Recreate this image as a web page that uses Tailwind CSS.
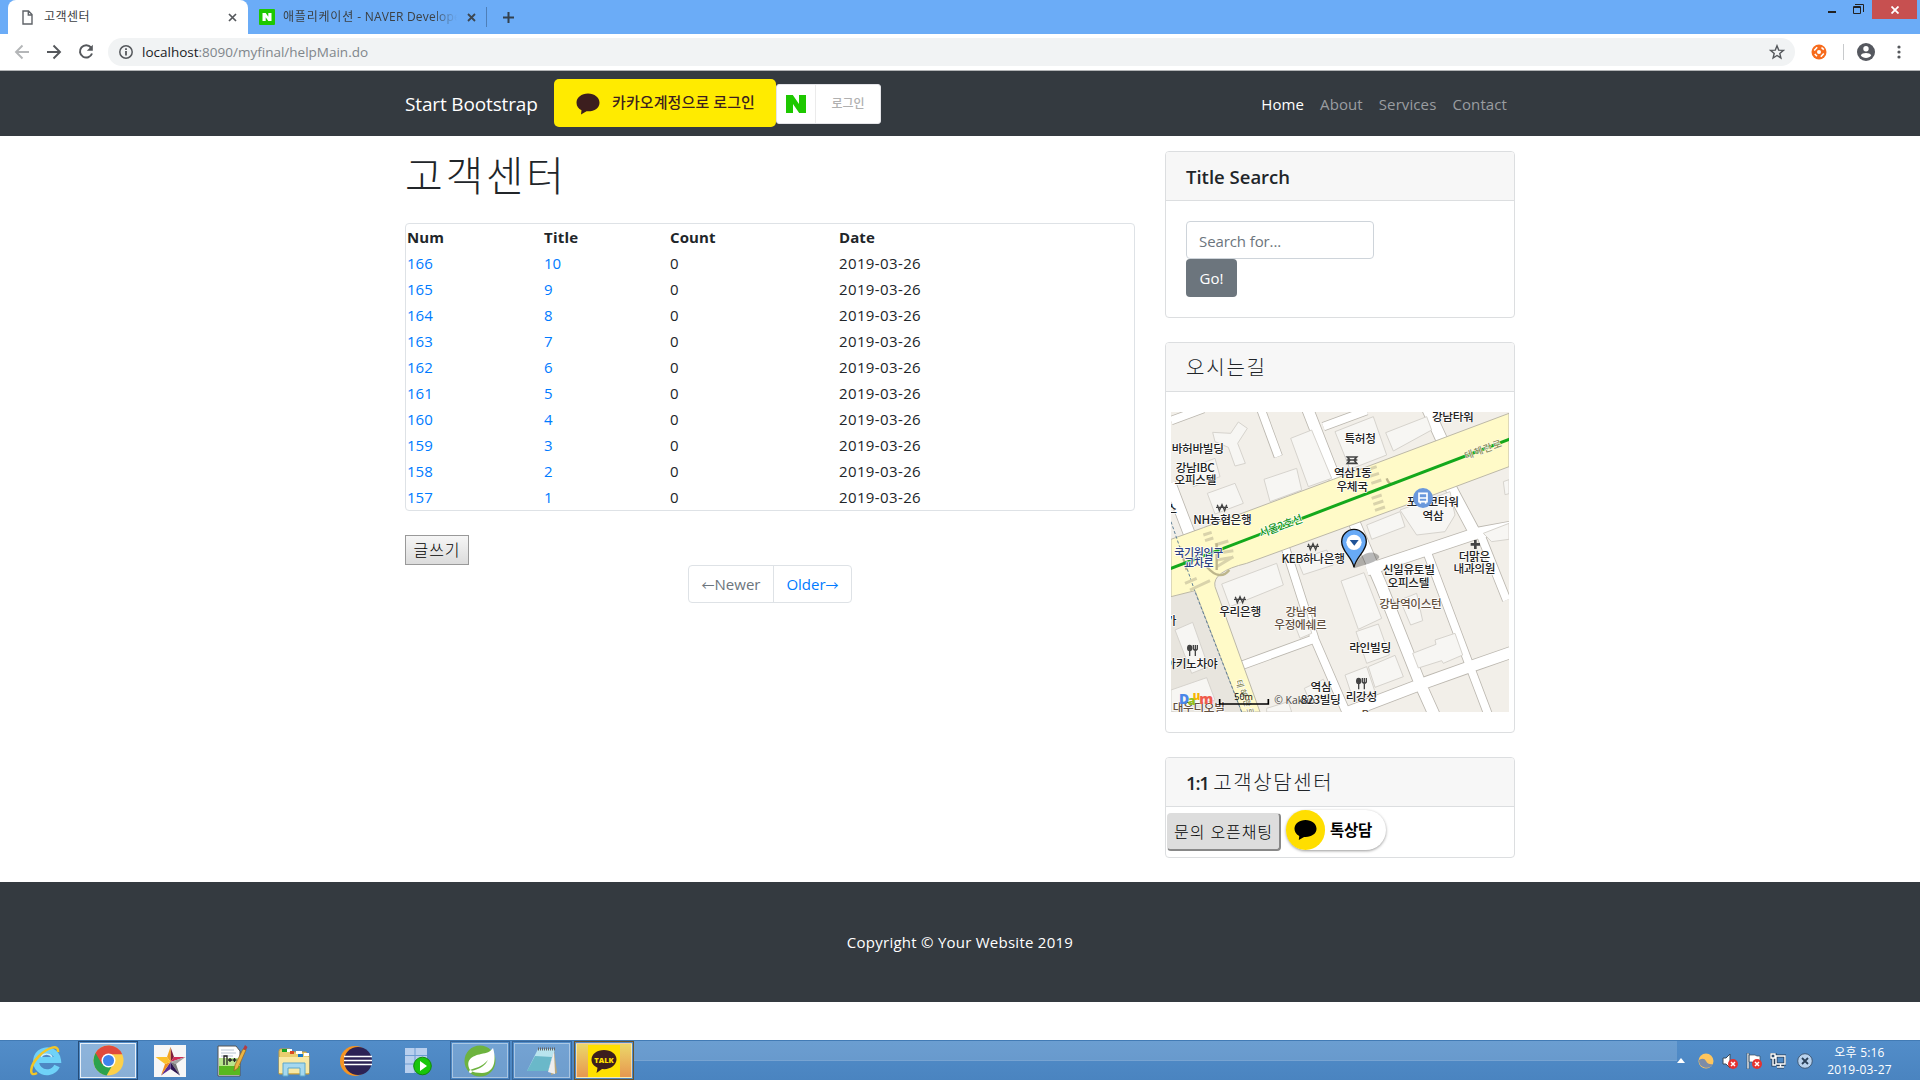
<!DOCTYPE html>
<html lang="ko">
<head>
<meta charset="utf-8">
<title>고객센터</title>
<script src="https://cdn.jsdelivr.net/npm/@tailwindcss/browser@4"></script>
</head>
<body class="w-[1920px] h-[1080px] overflow-hidden bg-white flex flex-col font-['Open_Sans','Noto_Sans_CJK_KR',sans-serif] text-[15px] leading-6 text-[#212529]">

<!-- Tab strip -->
<div class="h-[34px] shrink-0 bg-[#6bacf7] flex text-xs text-[#3c4043]">
  <div class="ml-2 w-[240px] shrink-0 bg-white rounded-t-lg flex items-center pl-[14px] pr-[10px]">
    <svg class="w-[11px] h-[15px] shrink-0" viewBox="0 0 11 15" fill="none" stroke="#5f6368" stroke-width="1.4"><path d="M1 1h5.5L10 4.5V14H1z M6.3 1v4H10"/></svg>
    <span class="ml-[11px] grow tracking-[0.5px]">고객센터</span>
    <svg class="w-[9px] h-[9px] mr-[1px]" viewBox="0 0 9 9" stroke="#55585c" stroke-width="1.7"><path d="M1 1l7 7M8 1L1 8"/></svg>
  </div>
  <div class="w-[238px] shrink-0 flex items-center pl-[11px]">
    <svg class="w-4 h-4 shrink-0" viewBox="0 0 16 16"><rect width="16" height="16" rx="1" fill="#1ec800"/><path d="M3.5 4h3.2l2.6 3.8V4h3.2v8H9.300L6.700 8.200V12H3.500z" fill="#fff"/></svg>
    <span class="ml-[8px] w-[174px] shrink-0 overflow-hidden whitespace-nowrap tracking-[0.2px] [mask-image:linear-gradient(to_right,black_86%,transparent)]"><span class="tracking-[0.8px]">애플리케이션</span> - NAVER Developers</span>
    <svg class="w-[9px] h-[9px] ml-[10px]" viewBox="0 0 9 9" stroke="#3c4650" stroke-width="1.800"><path d="M1 1l7 7M8 1L1 8"/></svg>
  </div>
  <div class="flex items-center">
    <div class="w-px h-5 bg-[#4e7fb8]"></div>
    <svg class="w-[11px] h-[11px] ml-4" viewBox="0 0 11 11" stroke="#33404e" stroke-width="2"><path d="M5.500 0v11M0 5.500h11"/></svg>
  </div>
  <div class="ml-auto flex mr-[3px]">
    <svg class="w-[36px] h-[19px] mr-[8px]" viewBox="0 0 36 19" fill="none" stroke="#222"><path d="M0 12h8" stroke-width="2"/><path d="M25.500 6.500h7v7h-7zM25 7.500h8M27 4.500h8.500V12" stroke-width="1"/></svg>
    <div class="w-[45px] h-[19px] bg-[#c75050] flex items-center justify-center">
      <svg class="w-[8px] h-[8px]" viewBox="0 0 8 8" stroke="#fff" stroke-width="1.800"><path d="M.5.500l7 7M7.500.500l-7 7"/></svg>
    </div>
  </div>
</div>

<!-- Address bar -->
<div class="h-[37px] shrink-0 bg-white border-b border-[#b2b4b6] flex items-center pl-[14px] pr-[19px]">
  <svg class="w-4 h-4" viewBox="0 0 16 16" fill="none" stroke="#b4b6b8" stroke-width="1.900"><path d="M15 8H2M8.500 1.500L2 8l6.500 6.500"/></svg>
  <svg class="w-4 h-4 ml-4" viewBox="0 0 16 16" fill="none" stroke="#55585c" stroke-width="1.900"><path d="M1 8h13M7.500 1.500L14 8l-6.500 6.500"/></svg>
  <svg class="w-4 h-4 ml-4" viewBox="0 0 16 16" fill="none" stroke="#55585c" stroke-width="2"><path d="M13 3.500A6.200 6.200 0 1 0 14 9.500"/><path d="M14.800.8v6h-6z" fill="#55585c" stroke="none"/></svg>
  <div class="ml-[14px] w-[1687px] h-7 rounded-full bg-[#f1f3f4] flex items-center pl-[11px] pr-[10px]">
    <svg class="w-[14px] h-[14px]" viewBox="0 0 14 14" fill="none" stroke="#55585c" stroke-width="1.500"><circle cx="7" cy="7" r="6.200"/><path d="M7 6v4.500M7 3.300v1.600" stroke-width="1.800"/></svg>
    <span class="ml-[9px] text-[13.5px] text-[#80868b]"><span class="text-[#202124]">localhost</span>:8090/myfinal/helpMain.do</span>
    <svg class="w-[16px] h-[16px] ml-auto" viewBox="0 0 16 16" fill="none" stroke="#55585c" stroke-width="1.400"><path d="M8 1.800l1.700 4.300 4.700.3-3.600 3 1.100 4.600L8 11.500 4.100 14l1.100-4.600-3.600-3 4.700-.3z"/></svg>
  </div>
  <svg class="w-4 h-4 ml-4" viewBox="0 0 16 16"><circle cx="8" cy="8" r="7.500" fill="#f76b1c"/><circle cx="8" cy="8" r="2" fill="#fff"/><path d="M3.200 6.500l3-3.300M10.500 3.500l2.300 2.200M12.800 9.500l-3 3.300M3.800 10l2.200 2.300" fill="none" stroke="#fff" stroke-width="1.600"/></svg>
  <div class="w-px h-4 bg-[#c8cacc] ml-4"></div>
  <svg class="w-[18px] h-[18px] ml-[13px]" viewBox="0 0 18 18"><circle cx="9" cy="9" r="9" fill="#55585f"/><circle cx="9" cy="5.800" r="2.700" fill="#fff"/><path d="M3.800 12.500c1.300-3.200 9.100-3.200 10.400 0-2 3.300-8.400 3.300-10.400 0z" fill="#fff"/></svg>
  <svg class="w-[4px] h-[14px] ml-auto" viewBox="0 0 4 14" fill="#55585c"><circle cx="2" cy="2" r="1.600"/><circle cx="2" cy="7" r="1.600"/><circle cx="2" cy="12" r="1.600"/></svg>
</div>

<!-- Site navigation -->
<nav class="h-[65px] shrink-0 bg-[#343a40]">
  <div class="w-[1110px] h-full mx-auto flex items-center">
    <span class="w-[149px] pt-px text-[19px] leading-[30px] text-white tracking-[-0.150px] whitespace-nowrap">Start Bootstrap</span>
    <div class="w-[222px] h-[48px] -mt-[2px] rounded-[5px] bg-[#ffeb00] flex items-center pl-[22px]">
      <svg class="w-6 h-[22px] mt-[2px]" viewBox="0 0 24 22" fill="#3c1e1e"><path d="M12 .5C5.500.5.500 4.500.500 9.700c0 3.500 2 6 5 7.600L5 21.500l5.500-3.300C18 18.800 23.500 15 23.500 9.700 23.500 4.500 18.500.5 12 .5z"/></svg>
      <span class="ml-[12px] -mt-px text-[15px] font-medium text-[#3c1e1e] tracking-[0.1px] whitespace-nowrap">카카오계정으로 로그인</span>
    </div>
    <div class="w-[105px] h-10 rounded-[3px] bg-white border border-[#e4e4e8] flex items-center">
      <div class="w-[39px] h-full border-r border-[#ebebeb] flex items-center justify-center">
        <svg class="w-5 h-[18px]" viewBox="0 0 20 18" fill="#1ec800"><path d="M0 0h6.800L13 9V0h7v18h-6.800L7 9v9H0z"/></svg>
      </div>
      <span class="grow text-center text-[12px] font-medium text-[#b0b0b0]">로그인</span>
    </div>
    <div class="ml-auto flex gap-4 pr-2 text-[#9a9da0] tracking-[0.1px]">
      <span class="text-white">Home</span><span>About</span><span>Services</span><span>Contact</span>
    </div>
  </div>
</nav>

<!-- Page content -->
<main class="w-[1110px] h-[746px] shrink-0 mx-auto flex justify-between">
  <section class="w-[730px]">
    <h1 class="mt-[15px] h-[48px] text-[41px] leading-[48px] font-light tracking-[2.700px]">고객센터</h1>
    <div class="mt-[24px] h-[288px] border border-[#dee2e6] rounded-[4px] pl-px">
      <div id="rows" class="grid grid-cols-[137px_126px_169px_1fr] auto-rows-[26px] leading-[26px]">
        <b class="font-bold tracking-[0.1px]">Num</b><b class="font-bold tracking-[0.200px]">Title</b><b class="font-bold tracking-[0.1px]">Count</b><b class="font-bold tracking-[0.1px]">Date</b>
      </div>
    </div>
    <button class="block mt-6 w-16 h-[30px] border border-[#999] bg-linear-to-b from-[#f6f6f6] to-[#dcdcdc] text-black text-[16px] leading-[26px] font-light tracking-[0.9px]">글쓰기</button>
    <div class="flex w-[164px] h-[38px] mx-auto border border-[#dee2e6] rounded-[4px] leading-[36px] text-center whitespace-nowrap">
      <span class="w-[85px] border-r border-[#dee2e6] text-[#6c757d]"><span class="text-[13px]">←</span>Newer</span>
      <span class="grow text-[#007bff]">Older<span class="text-[13px]">→</span></span>
    </div>
  </section>

  <aside class="w-[350px] pt-[15px] flex flex-col gap-6">
    <div class="h-[167px] border border-[#dcdee0] rounded-[4px] overflow-hidden">
      <h5 class="h-[49px] px-5 bg-[#f7f7f7] border-b border-[#dcdee0] text-[18.500px] leading-[49px] font-semibold">Title Search</h5>
      <div class="p-5">
        <div class="w-[188px] h-[38px] border border-[#ced4da] rounded-[4px] px-3 leading-[38px] text-[#6c757d] tracking-[-0.1px]">Search for...</div>
        <div class="w-[51px] h-[38px] rounded-[4px] bg-[#6c757d] text-white text-center leading-[38px]">Go!</div>
      </div>
    </div>

    <div class="h-[391px] border border-[#dcdee0] rounded-[4px] overflow-hidden">
      <h5 class="h-[49px] px-5 bg-[#f7f7f7] border-b border-[#dcdee0] text-[20px] leading-[49px] font-light tracking-[1.8px]">오시는길</h5>
      <svg class="block w-[338px] h-[300px] mt-5 ml-[5px]" viewBox="33 36 1014 900">
        <rect x="33" y="36" width="1014" height="900" fill="#f2efe9"/>
        <path d="M33 590L105 570 245 936H33z" fill="#e8e5de"/>
        <!-- side streets: casing, then surface -->
        <g fill="none" stroke-linejoin="round">
          <g stroke="#bcb8b0">
            <path stroke-width="28" d="M33 62L130 26M300 20L355 170M490 80L620 32"/>
            <path stroke-width="38" d="M440 20L530 250M800 20L850 130M30 250L95 420M865 250L945 400M575 350L665 560 780 850 825 950M1060 380L950 400 620 510M560 938L790 850 930 800 1060 755"/>
            <path stroke-width="28" d="M375 440L465 720 560 940M245 796L465 716M795 440L930 800 985 945M960 400L1040 600"/>
          </g>
          <g stroke="#fff">
            <path stroke-width="23" d="M33 62L130 26M300 20L355 169M490 80L620 32"/>
            <path stroke-width="33" d="M440 20L530 250M800 20L850 130M30 250L95 420M865 250L945 400M575 350L665 560 780 850 825 950M1060 380L950 400 620 510M560 938L790 850 930 800 1060 755"/>
            <path stroke-width="23" d="M375 440L465 720 560 940M245 796L465 716M795 440L930 800 985 945M960 400L1040 600"/>
          </g>
        </g>
        <g fill="#f7f6f3" stroke="#d6d3cd" stroke-width="3">
          <path d="M158 97L212 100 235 66 262 85 233 130 256 190 225 198 205 142 165 125z"/>
          <path d="M392 115L455 90 515 235 445 260z"/><path d="M312 238L410 205 425 270 330 305z"/>
          <path d="M85 205L165 175 180 230 100 260z"/><path d="M142 280L225 250 250 310 165 342z"/>
          <path d="M525 95L640 50 680 165 570 208z"/><path d="M677 98L800 50 815 90 700 153z"/>
          <path d="M720 330L870 275 885 345 855 395 770 405z"/><path d="M620 375L720 335 735 380 635 418z"/>
          <path d="M970 400L1047 370V418L995 425z"/><path d="M1030 245l17-6v42l-12 3z"/>
          <path d="M185 552L350 490 370 555 210 620z"/><path d="M412 480L500 450 520 495 430 524z"/>
          <path d="M543 543L612 518 665 655 595 688z"/><path d="M588 695L655 672 688 765 620 790z"/>
          <path d="M625 800L705 766 730 830 645 862z"/><path d="M555 825L620 800 645 875 580 900z"/>
          <path d="M758 760L828 733 825 720 885 700 908 765 850 790 845 782 775 804z"/>
          <path d="M720 600L770 580 788 662 752 675z"/><path d="M45 690L98 667 145 800 95 820z"/>
          <path d="M33 870L140 833 165 900 33 936z"/><path d="M433 865L490 838 510 880 450 905z"/><path d="M320 925L385 905 395 936H320z"/>
          <path d="M395 650L440 635 455 700 420 715z"/>
        </g>
        <!-- main road -->
        <path d="M33 418L130 383 520 238 1047 40V200L720 322 260 490Q155 515 165 560L300 936H245L105 572 33 590z" fill="#fffac8" stroke="#bcb8a8" stroke-width="3"/>
        <path d="M33 365L105 575 245 936" fill="none" stroke="#5f8098" stroke-width="3" stroke-dasharray="9 6"/>
        <g stroke="#d9d3ab" stroke-width="9"><path d="M620 210l30-10M627 230l30-10M634 250l30-10M635 295l30-10M640 313l30-10M645 331l30-10M130 405l25-8M135 422l25-8M75 550l35-15M90 570l60-28M165 435l40-12M170 500l50-30M170 460l50-8M170 480l50-8"/></g>
        <g fill="none" stroke="#bdb68c" stroke-width="7"><path d="M680 235q8 25 28 12M60 440l20 70M170 430v80M140 500q40 45 68 10"/></g>
        <path d="M30 506L1050 117" stroke="#14a81c" stroke-width="9"/>

        <g font-family="Noto Sans CJK KR, sans-serif" font-size="35" font-weight="500" letter-spacing="-1" text-anchor="middle" fill="#222" stroke="#fff" stroke-width="4" paint-order="stroke" stroke-linejoin="round">
          <text x="878" y="62">강남타워</text><text x="600" y="129">특허청</text>
          <text x="113" y="158">바허바빌딩</text><text x="105" y="216">강남IBC</text><text x="106" y="253">오피스텔</text>
          <text x="578" y="232">역삼1동</text><text x="576" y="272">우체국</text>
          <text x="187" y="371">NH농협은행</text><text x="818" y="319">포스코타워</text><text x="819" y="359">역삼</text>
          <text x="459" y="488">KEB하나은행</text><text x="943" y="482">더맑은</text><text x="943" y="519">내과의원</text>
          <text x="746" y="522">신일유토빌</text><text x="745" y="562">오피스텔</text>
          <text x="240" y="648">우리은행</text><text x="630" y="755">라인빌딩</text><text x="94" y="804">아키노차야</text>
          <text x="483" y="872">역삼</text><text x="482" y="911">823빌딩</text><text x="604" y="902">리강성</text>
          <text x="34" y="340">스</text><text x="33" y="674">가</text>
          <g fill="#63503f"><text x="751" y="625">강남역이스턴</text><text x="423" y="648">강남역</text><text x="421" y="688">우정에쉐르</text><text x="116" y="936">대우디오빌</text><text x="616" y="958">B</text></g>
          <g fill="#2c3f80" font-size="33"><text x="116" y="472">국기원입구</text><text x="116" y="502">교차로</text></g>
          <text fill="#14961c" font-size="33" transform="translate(366 389) rotate(-20)">서울2호선</text>
          <text fill="#8d8c55" font-size="29" stroke-width="2" transform="translate(974 158) rotate(-20)" letter-spacing="3">테헤란로</text>
          <g fill="#8d8c55" font-size="26"><text transform="translate(230 853) rotate(75)">테</text><text transform="translate(241 881) rotate(75)">헤</text><text transform="translate(252 910) rotate(75)">란</text><text transform="translate(262 938) rotate(75)">로</text></g>
        </g>
        <!-- bank, hospital, post office and restaurant symbols -->
        <g fill="none" stroke="#444" stroke-width="4"><path id="won" d="M172 314l6 18 8-18 8 18 6-18M168 322h36"/><path d="M445 431l6 18 8-18 8 18 6-18M441 439h36M226 590l6 18 8-18 8 18 6-18M222 598h36"/></g>
        <path d="M946 420v27M932 433h28" stroke="#444" stroke-width="8"/>
        <path d="M562 171h28l-8 9 8 10h-28l8-10zM560 180h32" fill="none" stroke="#444" stroke-width="5"/>
        <g fill="#444" stroke="#444" stroke-width="4"><ellipse cx="89" cy="744" rx="6" ry="8"/><path fill="none" d="M89 750v18M100 735v12q6 8 12 0v-12M106 735v33"/><ellipse cx="596" cy="843" rx="6" ry="8"/><path fill="none" d="M596 850v18M607 834v12q6 8 12 0v-12M613 834v34"/></g>
        <!-- bus stop and marker -->
        <circle cx="789" cy="294" r="30" fill="#6a98dc"/>
        <path d="M777 280h24v25h-24zM777 294h24M781 306v5M797 306v5" fill="none" stroke="#fff" stroke-width="5"/>
        <path d="M582 505Q600 455 640 458 680 470 630 490z" fill="#333" opacity=".35"/>
        <path d="M582 502C576 470 545 455 545 425a37 37 0 0 1 74 0C619 455 588 470 582 502z" fill="#68aaf6" stroke="#111" stroke-width="4"/>
        <circle cx="582" cy="427" r="23" fill="#fff"/><path d="M569 420h27l-13 17z" fill="#1f5397"/>
        <!-- provider mark and scale -->
        <g font-family="Open Sans, sans-serif" font-weight="800"><text x="57" y="911" font-size="42" fill="#4a86e8">D</text><text x="83" y="916" font-size="38" fill="#94c11f">a</text><text x="98" y="900" font-size="34" fill="#f7b500">u</text><text x="118" y="911" font-size="40" fill="#ef5b4c" textLength="42" lengthAdjust="spacingAndGlyphs">m</text></g>
        <path d="M179 897v15h146v-15" fill="none" stroke="#000" stroke-width="5"/>
        <g font-family="Open Sans, sans-serif"><text x="223" y="899" font-size="27">50m</text><text x="343" y="911" font-size="31" fill="#444">© Kakao</text></g>
      </svg>
    </div>

    <div class="h-[101px] border border-[#dcdee0] rounded-[4px] overflow-hidden">
      <h5 class="h-[49px] px-5 bg-[#f7f7f7] border-b border-[#dcdee0] text-[20px] leading-[49px] font-light tracking-[1.600px]"><span class="text-[18.500px] font-semibold tracking-[-1.200px] mr-px">1:1 </span>고객상담센터</h5>
      <div class="flex pt-[2px] pl-px">
        <div class="mt-[4px] w-[114px] h-[38px] rounded-[4px] bg-[#ddd] border-t border-l border-r-2 border-b-2 border-[#ddd] border-r-[#888] border-b-[#888] text-center text-[16px] leading-[36px] text-black font-light tracking-[0.9px] whitespace-nowrap">문의 오픈채팅</div>
        <div class="ml-[5px] mt-px w-[100px] h-[40px] rounded-full bg-white shadow-[0_1px_3px_rgba(0,0,0,0.4)] flex items-center">
          <div class="w-[39px] h-[40px] rounded-full bg-[#ffde00] flex items-center justify-center">
            <svg class="w-[23px] h-[22px]" viewBox="0 0 24 22"><path d="M12 .5C5.500.5.500 4.500.500 9.700c0 3.500 2 6 5 7.600L5 21.500l5.500-3.300C18 18.800 23.500 15 23.500 9.700 23.500 4.500 18.500.5 12 .5z"/></svg>
          </div>
          <span class="ml-[5px] text-[15.500px] font-bold text-black tracking-[-0.3px]">톡상담</span>
        </div>
      </div>
    </div>
  </aside>
</main>

<footer class="h-[120px] shrink-0 bg-[#343a40] text-white text-center leading-[121px] tracking-[0.25px]">Copyright © Your Website 2019</footer>

<!-- Taskbar -->
<div class="mt-auto h-10 shrink-0 bg-linear-to-b from-[#528dc9] to-[#4a84c0] border-t border-[#427bb5] flex items-center">
  <div class="w-[78px] h-full flex items-center justify-end pr-4">
    <svg class="w-8 h-8" viewBox="0 0 32 32" fill="none"><path d="M27 21A11 11 0 1 1 28 15H9" stroke="#6fd2f8" stroke-width="6"/><path d="M22 12a6 5 0 0 0-11 0" stroke="#c9f2ff" stroke-width="1.500"/><path d="M7 28C-2 33 0 20 9 11S29-1 28 7" stroke="#f3c626" stroke-width="2.500"/></svg>
  </div>
  <div class="w-[60px] h-full border border-[#254c78] p-px">
    <div class="w-full h-full border border-white/80 bg-white/35 flex items-center justify-center">
      <svg class="w-[31px] h-[31px]" viewBox="0 0 32 32"><circle cx="16" cy="16" r="15.500" fill="#fdd04a"/><path d="M16 16L2.600 8.300A15.500 15.500 0 0 0 14 31.400l7-12.400z" fill="#2ba24c"/><path d="M2.600 8.300A15.500 15.500 0 0 1 30.200 9.500H16L9.500 20z" fill="#e04a3c"/><circle cx="16" cy="16" r="7.200" fill="#fff"/><circle cx="16" cy="16" r="5.700" fill="#3f83ec"/></svg>
    </div>
  </div>
  <svg class="w-8 h-8 ml-4" viewBox="0 0 32 32"><rect width="32" height="32" fill="#f6f6f6"/><path d="M16.500 2L20 12l-3.500 5z" fill="#7f1d3a"/><path d="M16.500 2L13 12l3.500 5z" fill="#f2a321"/><path d="M20 12h11.500L16.500 17z" fill="#cf2b53"/><path d="M31.500 12L22 19l-5.500-2z" fill="#a2a2a2"/><path d="M22 19l4 11.500L16.500 17z" fill="#777"/><path d="M26 30.500L16.500 24v-7z" fill="#2d1550"/><path d="M16.500 17v7L7 30.500z" fill="#5b2c91"/><path d="M7 30.500L11 19l5.500-2z" fill="#f28c1e"/><path d="M1.500 12H13l3.500 5L11 19z" fill="#fbc02d"/></svg>
  <svg class="w-[31px] h-8 ml-[31px]" viewBox="0 0 31 32"><path d="M1 1h18l4 5v25H1z" fill="#fff" stroke="#555"/><path d="M2 17h21v13H2z" fill="#58b820"/><path d="M2 13h21v8H2z" fill="#b9e58c"/><path d="M4 5h13M4 8h15M4 11h12" stroke="#b8c4d2"/><path d="M7 20v-9h3v9M11 15h4M13 13v4M15.500 15h4M17.500 13v4" fill="none" stroke="#222" stroke-width="1.300"/><path d="M26 4l3 1-8 18-4 3 1-6z" fill="#eab543" stroke="#94631f" stroke-width=".7"/><path d="M26 4l2-4 2.500 2L29 5z" fill="#b43b44"/></svg>
  <svg class="w-8 h-8 ml-[30px]" viewBox="0 0 32 32"><path d="M2 4h10l2 3h14l3 3v19H1V6z" fill="#e9cd70" stroke="#c79d3d"/><path d="M4 4h5v3H4z" fill="#18a321"/><path d="M9 4h5v3H9zM18 6h6v3h-6zM26 8h5v3h-5z" fill="#fff"/><path d="M12 6h4v3h-4z" fill="#d84824"/><path d="M20 9h5v3h-5z" fill="#1778cb"/><path d="M1 12h30v16H1z" fill="#f8e8a5"/><path d="M5 31V18h22v13h-5v-8H10v8z" fill="#a5d8ef" stroke="#5da6ca"/></svg>
  <svg class="w-8 h-8 ml-[30px]" viewBox="0 0 32 32"><circle cx="15" cy="16" r="15" fill="#f59422"/><circle cx="18" cy="16" r="14" fill="#2c2255"/><path d="M4 11.500h28M4 15.500h28M4 19.500h28" stroke="#fff" stroke-width="1.600"/></svg>
  <svg class="w-[28px] h-8 ml-[32px]" viewBox="0 0 28 32"><path d="M1 3h22v25H1z" fill="#b8cfee"/><path d="M1 10.500h22M1 19h22M11 3v25" stroke="#6d9bd1"/><circle cx="18.500" cy="21" r="8.800" fill="#18c60a" stroke="#12880b"/><path d="M16 16l7 5-7 5z" fill="#fff"/></svg>
  <div class="ml-[18px] w-[60px] h-full border border-[#376598] p-px">
    <div class="w-full h-full border border-white/40 bg-white/20 flex items-center justify-center">
      <svg class="w-8 h-8" viewBox="0 0 32 32"><circle cx="16" cy="16" r="15.500" fill="#6db33f"/><path d="M29 3c3 9 3 25-11 25-5 0-9-1-11-2 9-2 14-5 17-11C18 22 11 23 6 25 1 15 8 11 17 9c6-1 9-2 12-6z" fill="#fff"/><circle cx="6.500" cy="26.500" r="1.500" fill="#fff"/></svg>
    </div>
  </div>
  <div class="ml-[2px] w-[60px] h-full border border-[#376598] p-px">
    <div class="w-full h-full border border-white/40 bg-white/20 flex items-center justify-center">
      <svg class="w-8 h-8" viewBox="0 0 32 32"><path d="M28 5l3 23-6 2z" fill="#b9a779"/><path d="M12 4h17l-7 22H1z" fill="#b9e4ee"/><path d="M9 11l17 1-4 14H1z" fill="#3f9fb5" opacity=".65"/><path d="M22 27l6-21 1 23z" fill="#eee"/><path d="M12 4h17" stroke="#666" stroke-width="3" stroke-dasharray="1 1"/></svg>
    </div>
  </div>
  <div class="ml-[2px] w-[60px] h-full border border-[#69532c] p-px">
    <div class="w-full h-full border border-white/50 bg-linear-to-b from-[#ead76a] to-[#e6974f] flex items-center justify-center">
      <svg class="w-8 h-8" viewBox="0 0 32 32"><rect width="32" height="32" fill="#ffe000"/><path d="M16 5C9 5 3.500 9 3.500 14.500c0 4 2.500 6.500 6 8.200L8.500 28l5.500-4c8 1 14.500-4 14.500-9.500S23 5 16 5z" fill="#3c1e1e"/><text x="16" y="17.500" text-anchor="middle" font-size="7.500" font-weight="800" fill="#ffe000" font-family="Open Sans, sans-serif">TALK</text></svg>
    </div>
  </div>
  <div class="grow min-w-0 h-5 self-start bg-white/15 border-b border-white/10"></div>
  <div class="w-[243px] shrink-0 h-full flex items-center">
    <svg class="w-2 h-[5px]" viewBox="0 0 8 5"><path d="M0 5l4-5 4 5z" fill="#fff"/></svg>
    <svg class="w-4 h-4 ml-[13px]" viewBox="0 0 16 16"><circle cx="8" cy="8" r="7.500" fill="#ffc65d"/><path d="M1 7q5-3 7 1t7 3A7.500 7.500 0 0 1 1 7z" fill="#7c8ca8"/></svg>
    <svg class="w-4 h-4 ml-[8px]" viewBox="0 0 16 16"><path d="M1 5h3l4-4v14l-4-4H1z" fill="#fff" stroke="#384a5b"/><circle cx="11" cy="11" r="5" fill="#e53330"/><path d="M9 9l4 4M13 9l-4 4" stroke="#fff" stroke-width="1.500"/></svg>
    <svg class="w-4 h-4 ml-[8px]" viewBox="0 0 16 16"><path d="M1 0h2v16H1zM3 2h6l2 1h3v7H8L6 9H3z" fill="#fff" stroke="#384a5b" stroke-width=".7"/><circle cx="11" cy="11" r="5" fill="#e53330"/><path d="M9 9l4 4M13 9l-4 4" stroke="#fff" stroke-width="1.500"/></svg>
    <svg class="w-4 h-4 ml-[8px]" viewBox="0 0 16 16" fill="none"><path d="M6 3h9v8H6zM10.500 11v3M7 14h7M1 1h4v4H1zM3 5v7h3" stroke="#263d57" stroke-width="3"/><path d="M6 3h9v8H6zM10.500 11v3M7 14h7M1 1h4v4H1zM3 5v7h3" stroke="#fff" stroke-width="1.400"/></svg>
    <svg class="w-4 h-4 ml-[11px]" viewBox="0 0 16 16"><circle cx="8" cy="8" r="7.300" fill="#b8d2ed" stroke="#405a77"/><path d="M5 5l6 6M11 5l-6 6" stroke="#2a4059" stroke-width="1.800"/></svg>
    <div class="w-[67px] ml-[13px] text-center text-white text-[12px] leading-[17px] whitespace-nowrap tracking-[0.2px]"><div>오후 5:16</div><div>2019-03-27</div></div>
  </div>
</div>

<script>
  const rows = document.getElementById('rows');
  for (let i = 10; i >= 1; i--) {
    rows.insertAdjacentHTML('beforeend',
      `<span class="text-[#007bff]">${156 + i}</span><span class="text-[#007bff]">${i}</span><span>0</span><span class="tracking-[0.38px]">2019-03-26</span>`);
  }
</script>
</body>
</html>
